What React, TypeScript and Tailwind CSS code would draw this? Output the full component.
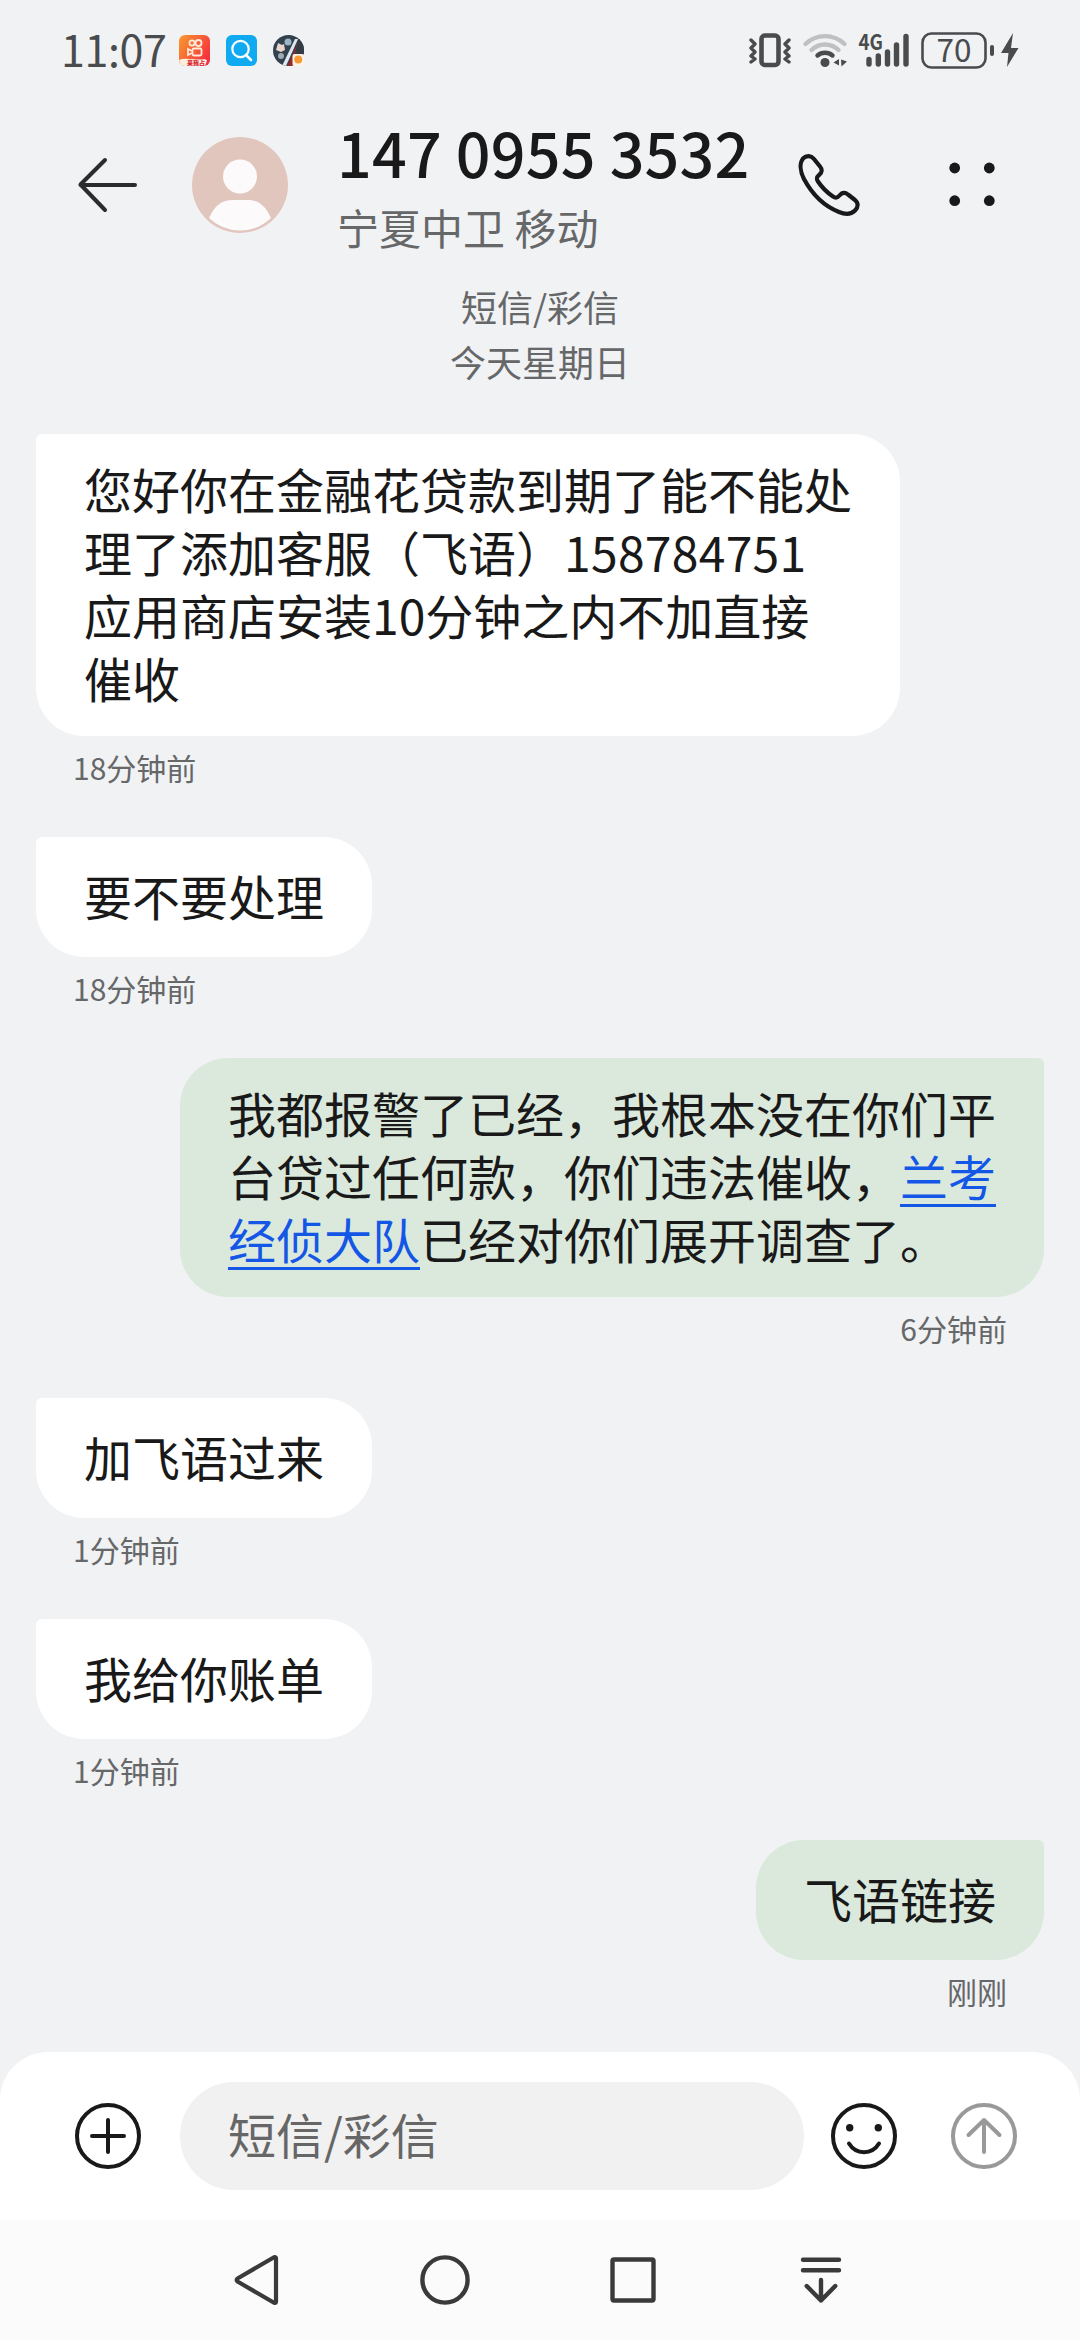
import type { ReactNode } from "react";
import { clsx } from "clsx";

type Message = {
  mine?: boolean;
  text: ReactNode;
  time: string;
};

const linkClass =
  "text-[#1457e6] underline decoration-[3px] underline-offset-[8px]";

const messages: Message[] = [
  {
    text: (
      <>
        您好你在金融花贷款到期了能不能处
        <br />
        理了添加客服（飞语）<span className="tracking-[0.3px]">158784751</span>
        <br />
        应用商店安装10分钟之内不加直接
        <br />
        催收
      </>
    ),
    time: "18分钟前",
  },
  { text: "要不要处理", time: "18分钟前" },
  {
    mine: true,
    text: (
      <>
        我都报警了已经，我根本没在你们平
        <br />
        台贷过任何款，你们违法催收，
        <a className={linkClass}>
          兰考
          <br />
          经侦大队
        </a>
        已经对你们展开调查了。
      </>
    ),
    time: "6分钟前",
  },
  { text: "加飞语过来", time: "1分钟前" },
  { text: "我给你账单", time: "1分钟前" },
  { mine: true, text: "飞语链接", time: "刚刚" },
];

export default function App() {
  return (
    <div
      lang="zh-CN"
      className="flex h-[2340px] w-[1080px] flex-col overflow-hidden bg-[#f1f2f4] font-['Noto_Sans_CJK_SC',sans-serif] text-[#191919]"
    >
      <StatusBar />
      <Header />
      <div className="flex h-[158px] shrink-0 flex-col items-center pt-[3px] text-[36px] leading-[55px] text-[#666769]">
        <span>短信/彩信</span>
        <span>今天星期日</span>
      </div>
      <main className="flex min-h-0 flex-1 flex-col px-9">
        {messages.map((m, idx) => (
          <Bubble key={idx} {...m} />
        ))}
      </main>
      <Composer />
      <NavBar />
    </div>
  );
}

function Bubble({ mine, text, time }: Message) {
  return (
    <section
      className={clsx("flex shrink-0 flex-col", mine ? "items-end" : "items-start")}
    >
      <div
        className={clsx(
          "flex min-h-[120px] flex-col justify-center rounded-[48px] px-12 pt-[23px] pb-[27px] text-[48px] leading-[63px] whitespace-nowrap",
          mine ? "rounded-tr-[6px] bg-[#dbe9dd]" : "rounded-tl-[6px] bg-white"
        )}
      >
        <p>{text}</p>
      </div>
      <p className="h-[101px] px-[37px] pt-[11px] text-[30px] leading-[40px] text-[#666769]">
        {time}
      </p>
    </section>
  );
}

function StatusBar() {
  return (
    <div className="flex h-[100px] shrink-0 items-center pr-[50px] pl-[61px] text-[#4a4b4d]">
      <span className="w-[118px] pb-[3px] text-[43px] leading-[97px] tracking-[-0.4px]">11:07</span>
      <div className="flex gap-4">
        <VideoAppIcon />
        <svg width="31" height="31" viewBox="0 0 31 31" fill="none">
          <rect width="31" height="31" rx="6" fill="#10aaf0" />
          <circle cx="14.5" cy="14" r="8.2" stroke="#fff" strokeWidth="2.2" />
          <path d="M20 20l5 5" stroke="#fff" strokeWidth="2.6" strokeLinecap="round" />
        </svg>
        <GameAppIcon />
      </div>
      <svg width="290" height="50" viewBox="740 25 290 50" fill="none" className="ml-auto">
        <rect x="761.5" y="35.5" width="17" height="29.500" rx="3.5" stroke="currentColor" strokeWidth="4.6" />
        <path
          d="M751 40l4 4-4 4 4 4-4 4 4 3-4 3M789 40l-4 4 4 4-4 4 4 4-4 3 4 3"
          stroke="currentColor"
          strokeWidth="3.4"
          strokeLinecap="round"
          strokeLinejoin="round"
        />
        <g stroke="#bfc0c2" strokeWidth="4.4" strokeLinecap="round">
          <path d="M805.5 44a28 28 0 0 1 39 0" />
          <path d="M811.5 50a19.500 19.500 0 0 1 27 0" />
        </g>
        <path d="M817.5 55.500a11.500 11.500 0 0 1 15 0" stroke="currentColor" strokeWidth="4.4" strokeLinecap="round" />
        <circle cx="825" cy="62.500" r="4.500" fill="currentColor" />
        <path d="M839 59v6.500l-5.500-3zM841 59.500l6 2-5.500 5z" fill="currentColor" />
        <g stroke="currentColor" strokeWidth="5.4" strokeLinecap="round">
          <path d="M869 59.500v4.500M878.3 56v8M887.5 52v12M896.5 45v19M906 36.500V64" />
        </g>
        <text x="858.5" y="50" fontSize="21.5" fontWeight="700" textLength="24.5" lengthAdjust="spacingAndGlyphs" fill="currentColor">
          4G
        </text>
        <rect x="922.5" y="33.500" width="63" height="34" rx="9" stroke="currentColor" strokeWidth="2.6" />
        <text x="954" y="62" fontSize="31.5" textAnchor="middle" fill="currentColor">
          70
        </text>
        <path d="M992 47v7" stroke="currentColor" strokeWidth="4" strokeLinecap="round" />
        <path d="M1013 33l-12 20h7.500l-1.500 14 11.500-19h-7.500z" fill="currentColor" />
      </svg>
    </div>
  );
}

function VideoAppIcon() {
  return (
    <svg width="31" height="31" viewBox="0 0 31 31" fill="none">
      <defs>
        <linearGradient id="video" x1="0" y1="0" x2="1" y2="0.6">
          <stop stopColor="#f99b2c" />
          <stop offset="1" stopColor="#f5333f" />
        </linearGradient>
        <clipPath id="videoClip">
          <rect width="31" height="31" rx="6" />
        </clipPath>
      </defs>
      <g clipPath="url(#videoClip)">
        <rect width="31" height="31" fill="url(#video)" />
        <g stroke="#ffe9d8" strokeWidth="1.8">
          <circle cx="13" cy="8" r="2.6" />
          <circle cx="19.5" cy="8" r="3" />
          <rect x="13.5" y="13.500" width="9" height="7" rx="1.5" />
          <path d="M13 16l-4-2v6l4-2" />
        </g>
        <path d="M0 25q4-2 10-1l12 .5q5-1 6 1l-2 5.500H2z" fill="#fdeee0" />
        <text x="8" y="30" fontSize="6" fontWeight="900" fill="#d8232f">
          来我占
        </text>
      </g>
    </svg>
  );
}

function GameAppIcon() {
  return (
    <svg width="31" height="31" viewBox="0 0 31 31" fill="none">
      <defs>
        <clipPath id="gameClip">
          <circle cx="15.5" cy="15.500" r="15.500" />
        </clipPath>
      </defs>
      <g clipPath="url(#gameClip)">
        <rect width="31" height="31" fill="#31414e" />
        <path d="M22 4L9 31h4L25 4z" fill="#dfe8ee" />
        <path d="M27 3L14 31h7l6-14z" fill="#8d2a2c" />
        <path d="M26 3l5 6v10h-9z" fill="#333b45" />
        <circle cx="15" cy="7" r="3.500" fill="#9bb3c4" />
        <path d="M3 15l2-7 4 2 2-1 1 6-4 2z" fill="#ead6cd" />
        <circle cx="8" cy="21" r="3" fill="#9fa9b2" />
      </g>
      <rect x="19.5" y="19" width="11.5" height="12" rx="2" fill="#fdf3e8" />
      <circle cx="25.2" cy="24.500" r="4" fill="#f79a35" />
    </svg>
  );
}

function Header() {
  return (
    <header className="flex h-[176px] shrink-0 items-center pr-[84px] pl-[76px]">
      <svg width="64" height="60" viewBox="76 155 64 60" fill="none" className="mb-[6px]">
        <path
          d="M135 185H80.500M105 160L80.500 184.500 105 210"
          stroke="#2b2c2e"
          strokeWidth="4"
          strokeLinecap="round"
          strokeLinejoin="round"
        />
      </svg>
      <svg width="96" height="96" viewBox="0 0 96 96" className="mb-[6px] ml-[52px]">
        <circle cx="48" cy="48" r="48" fill="#e1c6be" />
        <circle cx="48" cy="39.500" r="17" fill="#fcfafa" />
        <path d="M17 81C23 68 30 63 41 63h14c11 0 18 5 24 18q-13 12.500-31 12.500T17 81z" fill="#fcfafa" />
      </svg>
      <div className="mb-[6px] ml-[49px] flex w-[442px] flex-col">
        <h1 className="h-[82px] text-[61px] leading-[82px] font-medium tracking-[0.2px] whitespace-nowrap">
          147 0955 3532
        </h1>
        <p className="h-[67px] text-[42px] leading-[67px] text-[#666769]">宁夏中卫 移动</p>
      </div>
      <svg width="64" height="64" viewBox="796 153 64 64" fill="none" className="mb-[6px] ml-[17px]">
        <path
          d="M803 158.500c3.500-3.500 8-3 11 .5l6 7.500c2.500 3 2 6-.5 8-3 2.500-3.500 4-1.500 7 4 6 9 11 15 15 3 2 4.500 1.500 7-1.500 2-2.500 5-3 8-.5l7 5.500c3.500 3 3.500 7 0 10.500-4.500 4.500-10 4-16 1.500-15-6-27-18-35-33-4-8-4.500-16-1-20.500z"
          stroke="#191919"
          strokeWidth="4.2"
          strokeLinejoin="round"
        />
      </svg>
      <svg width="48" height="48" viewBox="948 161 48 48" fill="#191919" className="mb-[6px] ml-auto">
        <circle cx="954.7" cy="168" r="5.4" />
        <circle cx="989.3" cy="168" r="5.4" />
        <circle cx="954.7" cy="200.7" r="5.4" />
        <circle cx="989.3" cy="200.7" r="5.4" />
      </svg>
    </header>
  );
}

function Composer() {
  return (
    <footer className="flex h-[168px] shrink-0 items-center rounded-t-[48px] bg-white pr-[60px] pl-[72px]">
      <svg width="72" height="72" viewBox="-36 -36 72 72" fill="none" stroke="#191919" strokeWidth="4" strokeLinecap="round">
        <circle r="31" />
        <path d="M-16 0h32M0-16v32" />
      </svg>
      <div className="ml-9 h-[108px] w-[624px] rounded-full bg-[#f1f1f1] pl-12 text-[48px] leading-[103px] text-[#666]">
        短信/彩信
      </div>
      <svg width="72" height="72" viewBox="-36 -36 72 72" fill="none" stroke="#191919" strokeWidth="4" strokeLinecap="round" className="ml-6">
        <circle r="31" />
        <path d="M-15 7.500C-8 19 8 19 15 7.500" />
        <circle cx="-14.3" cy="-8.300" r="3.700" fill="#191919" stroke="none" />
        <circle cx="14.3" cy="-8.300" r="3.700" fill="#191919" stroke="none" />
      </svg>
      <svg width="72" height="72" viewBox="-36 -36 72 72" fill="none" stroke="#999" strokeWidth="4" strokeLinecap="round" strokeLinejoin="round" className="ml-12">
        <circle r="31" />
        <path d="M0 16v-32M-15.500-1L0-16 15.500-1" />
      </svg>
    </footer>
  );
}

function NavBar() {
  return (
    <nav className="flex h-[120px] shrink-0 items-center justify-center gap-[128px] bg-[#fbfbfb] pr-[3px]">
      <svg width="60" height="60" viewBox="226 2250 60 60" fill="none" stroke="#3a3a3a" strokeWidth="4.2" strokeLinejoin="round">
        <path d="M273.500 2257q1.500 0 1.500 1.500v43q0 1.500-1.500 1.500l-37-21.500q-1.500-1.500 0-3z" />
      </svg>
      <svg width="60" height="60" viewBox="-30 -30 60 60" fill="none" stroke="#3a3a3a" strokeWidth="4.4">
        <circle r="22.6" />
      </svg>
      <svg width="60" height="60" viewBox="-30 -30 60 60" fill="none" stroke="#3a3a3a" strokeWidth="4.4">
        <rect x="-20.5" y="-20.500" width="41" height="41" rx="1.5" />
      </svg>
      <svg width="60" height="60" viewBox="-30 -30 60 60" fill="none" stroke="#3a3a3a" strokeWidth="4.4" strokeLinecap="round" strokeLinejoin="round">
        <path d="M-18-20.300h36M-18-9.800h36M0 0v20.500M-14.300 6L0 20.500 14.300 6" />
      </svg>
    </nav>
  );
}
